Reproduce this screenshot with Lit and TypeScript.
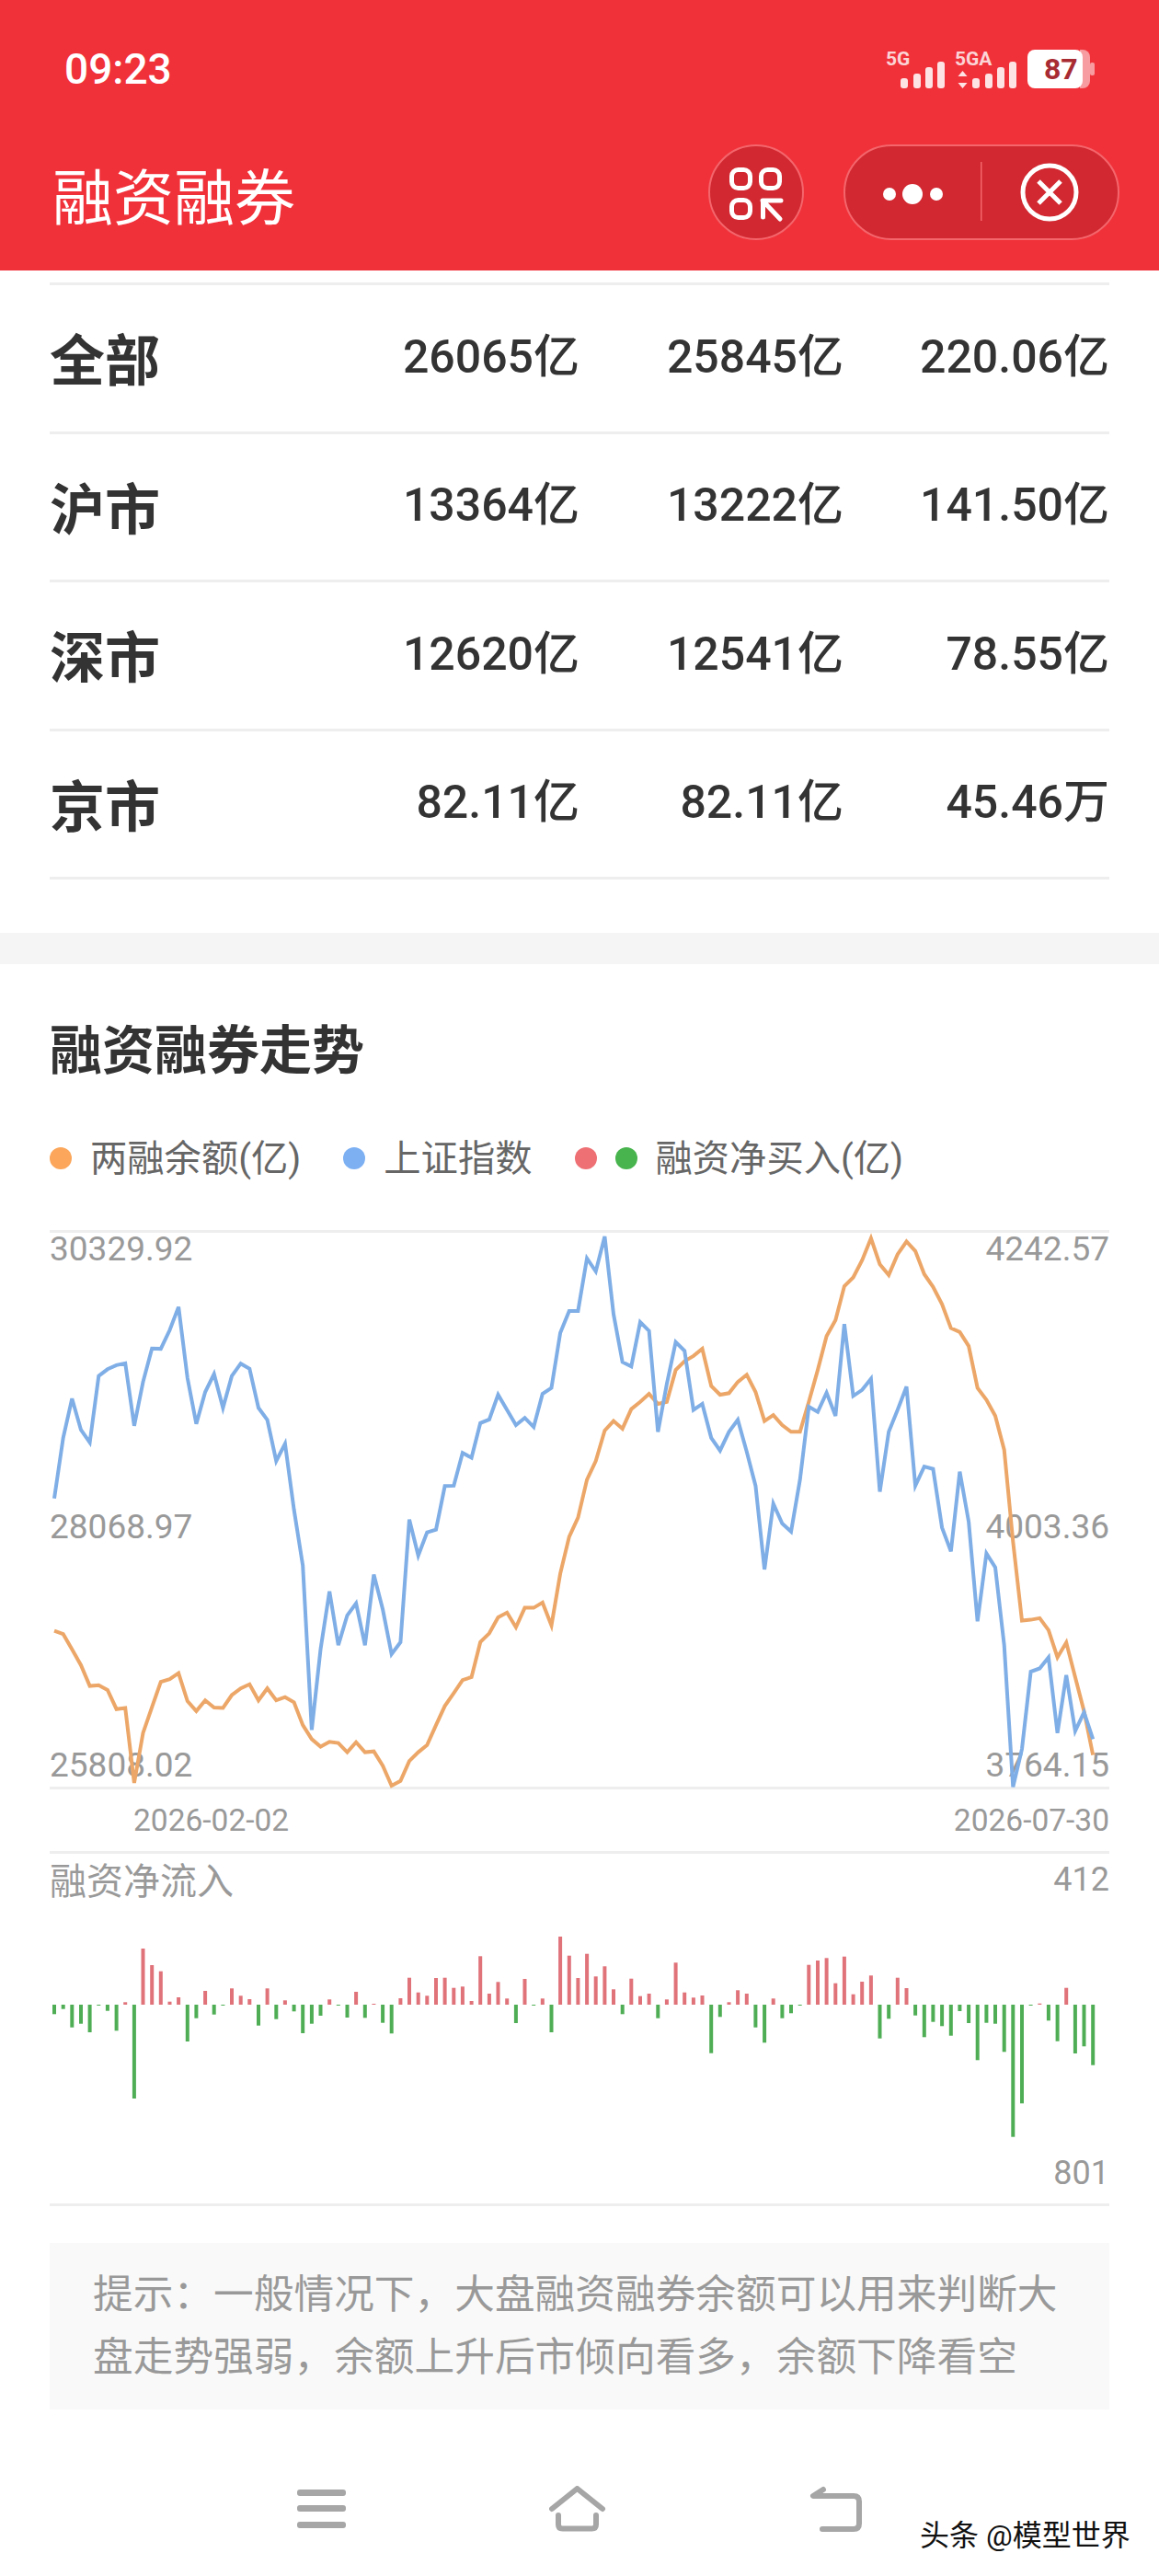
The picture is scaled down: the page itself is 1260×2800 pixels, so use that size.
import {LitElement, html, css, svg} from 'lit';
import {customElement} from 'lit/decorators.js';

// series are read off the reference: y in crop units, index = trading day
const BLUE = [712,560,462,540,572,405,388,378,373,530,420,336,337,290,232,410,525,445,400,485,405,374,387,485,515,618,575,740,880,1292,1090,945,1080,1005,975,1080,903,990,1102,1072,765,855,797,790,681,680,598,610,523,514,452,490,528,510,533,450,435,297,242,242,
  110,143,55,250,370,381,270,292,545,425,320,342,490,475,560,592,545,515,595,680,890,725,775,795,665,482,495,447,505,275,455,440,412,695,545,490,432,680,632,638,785,845,645,770,1020,850,885,1080,1435,1340,1146,1138,1110,1300,1155,1295,1248,1315];
const ORANGE = [1044,1052,1090,1130,1182,1180,1192,1240,1237,1425,1300,1235,1172,1165,1150,1220,1245,1218,1236,1237,1205,1188,1178,1218,1188,1218,1210,1223,1280,1315,1334,1322,1325,1348,1323,1348,1346,1382,1432,1420,1370,1348,1330,1280,1232,1200,1167,1160,1072,1050,1010,998,1035,986,986,973,1030,900,808,760,
  665,618,542,518,537,488,470,450,475,470,390,368,355,337,430,452,448,420,402,445,518,503,528,545,545,470,390,305,265,180,158,115,60,125,152,100,68,92,150,182,225,285,295,330,435,465,505,590,820,1018,1016,1012,1042,1110,1073,1160,1245,1355];
const BARS = [568,551,611,599,627,539,557,622,529,843,354,408,428,527,513,657,581,492,569,538,484,508,519,605,484,584,523,559,630,599,573,520,540,579,495,580,534,596,631,516,449,497,508,450,449,482,478,525,379,501,463,517,597,453,538,517,627,315,377,450,
  371,445,412,487,568,452,509,501,581,520,400,497,514,507,695,577,529,490,501,611,661,517,581,565,539,407,393,385,467,380,503,462,442,647,583,449,483,572,643,593,607,638,558,597,718,596,599,691,968,859,537,533,589,656,482,696,673,734];

const px = (i: number) => 59 + i * 9.651;
const py = (v: number) => 1320 + v / 2.306;
const points = (list: number[]) => list.map((v, i) => `${px(i).toFixed(1)},${py(v).toFixed(1)}`).join(' ');

const ROWS = [
  ['全部', '26065亿', '25845亿', '220.06亿'],
  ['沪市', '13364亿', '13222亿', '141.50亿'],
  ['深市', '12620亿', '12541亿', '78.55亿'],
  ['京市', '82.11亿', '82.11亿', '45.46万'],
];

@customElement('app-root')
export class AppRoot extends LitElement {
  static styles = css`
    :host {
      display: block;
      width: 1260px;
      height: 2800px;
      overflow: hidden;
      position: relative;
      background: #fff;
      font-family: Roboto, "Noto Sans CJK SC", sans-serif;
    }
    .header {
      height: 294px;
      box-sizing: border-box;
      background: #f1313a;
      color: #fff;
      padding: 0 43px 0 57px;
      display: flex;
      flex-direction: column;
    }
    .status {
      height: 157px;
      display: flex;
      justify-content: space-between;
      align-items: flex-start;
    }
    .time {
      margin: 46px 0 0 13px;
      font-size: 46px;
      line-height: 58px;
      font-weight: 500;
    }
    .status-icons {
      display: block;
      margin: 46px 27px 0 0;
    }
    .nav {
      display: flex;
      align-items: center;
      height: 104px;
    }
    .page-title {
      flex: 1;
      font-size: 66px;
      line-height: 80px;
      margin-top: 15px;
    }
    .scan {
      width: 104px;
      height: 104px;
      box-sizing: border-box;
      border-radius: 50%;
      background: #d22831;
      border: 2px solid #f4666c;
      margin-right: 43px;
    }
    .capsule {
      width: 300px;
      height: 104px;
      box-sizing: border-box;
      border-radius: 52px;
      background: #d22831;
      border: 2px solid #f4666c;
    }
    .scan svg, .capsule svg {
      display: block;
      margin: -2px;
    }
    .table {
      margin: 13px 54px 0;
      border-bottom: 3px solid #eee;
    }
    .row {
      height: 161.5px;
      box-sizing: border-box;
      border-top: 3px solid #eee;
      display: grid;
      grid-template-columns: 1fr 287px 287px 289px;
      align-items: center;
      color: #333;
    }
    .name {
      font-size: 60px;
      line-height: 70px;
      font-weight: 700;
      margin-top: 10px;
    }
    .val {
      text-align: right;
      font-size: 50px;
      line-height: 60px;
      font-weight: 500;
      margin-top: -3px;
    }
    .band {
      height: 34px;
      margin-top: 58px;
      background: #f5f5f5;
    }
    .section-title {
      margin: 67px 54px 0;
      font-size: 57px;
      line-height: 56px;
      font-weight: 700;
      color: #333;
    }
    .legend {
      margin: 60px 54px 0;
      height: 48px;
      display: flex;
      align-items: center;
      font-size: 40.3px;
      color: #666;
    }
    .dot {
      width: 24px;
      height: 24px;
      border-radius: 50%;
      margin-right: 20px;
      position: relative;
      top: 4px;
    }
    .legend-text {
      margin-right: 46px;
    }
    .chart {
      display: block;
      margin-top: 51px;
    }
    .chart text {
      fill: #999;
      font-family: Roboto, "Noto Sans CJK SC", sans-serif;
    }
    .tip {
      margin: 38px 54px 0;
      box-sizing: border-box;
      height: 181px;
      padding: 22px 40px 0 47px;
      background: #f9f9f9;
      color: #999;
      font-size: 43.7px;
      line-height: 68px;
    }
    .softkeys {
      display: flex;
      margin: 83px 0 0 323px;
      gap: 221px;
      align-items: flex-start;
    }
    .softkeys svg {
      display: block;
    }
    .watermark {
      position: absolute;
      left: 1000px;
      top: 2736px;
      font-size: 32px;
      line-height: 40px;
      color: #111;
      white-space: nowrap;
    }
  `;

  private renderStatusIcons() {
    const bars = (x: number) => [[0, 11], [14, 16], [27, 23], [40, 29]].map(([dx, h]) =>
      svg`<rect x=${x + dx} y=${96 - h - 46} width="8" height=${h} rx="3" fill="#fde3e4"/>`);
    return html`<svg class="status-icons" width="232" height="52" viewBox="0 0 232 52">
      <text x="5" y="25" font-size="21" font-weight="700" fill="#fbd4d6" font-family="Roboto, sans-serif">5G</text>
      ${bars(21)}
      <text x="80" y="25" font-size="21" font-weight="700" fill="#fbd4d6" font-family="Roboto, sans-serif">5GA</text>
      <path d="M88.500 31l5 6h-10zM88.500 50l5-6h-10z" fill="#fde3e4"/>
      ${bars(99)}
      <path d="M216 8h3a8 8 0 0 1 8 8v26a8 8 0 0 1-8 8h-3z" fill="#f79ca0"/>
      <rect x="227" y="22" width="5" height="14" rx="2" fill="#f79ca0"/>
      <rect x="159" y="8" width="60" height="42" rx="8" fill="#fff"/>
      <text x="177" y="40" font-size="32" font-weight="700" fill="#a82b33" font-family="Roboto, sans-serif">87</text>
    </svg>`;
  }

  private renderChart() {
    const base = 2179;
    return html`<svg class="chart" width="1260" height="1070" viewBox="0 1330 1260 1070">
      <g fill="#eee">
        <rect x="54" y="1337" width="1152" height="3"/>
        <rect x="54" y="1942" width="1152" height="3"/>
        <rect x="54" y="2012" width="1152" height="3"/>
        <rect x="54" y="2395" width="1152" height="3"/>
      </g>
      <g font-size="37">
        <text x="54" y="1370">30329.92</text>
        <text x="54" y="1672">28068.97</text>
        <text x="54" y="1931">25808.02</text>
        <text x="1206" y="1370" text-anchor="end">4242.57</text>
        <text x="1206" y="1672" text-anchor="end">4003.36</text>
        <text x="1206" y="1931" text-anchor="end">3764.15</text>
      </g>
      <g font-size="33.500">
        <text x="145" y="1990">2026-02-02</text>
        <text x="1206" y="1990" text-anchor="end">2026-07-30</text>
      </g>
      <text x="54" y="2059" font-size="40">融资净流入</text>
      <text x="1206" y="2055" font-size="36" text-anchor="end">412</text>
      <text x="1206" y="2374" font-size="36" text-anchor="end">801</text>
      <polyline points=${points(ORANGE)} fill="none" stroke="#eca768" stroke-width="4" stroke-linejoin="miter"/>
      <polyline points=${points(BLUE)} fill="none" stroke="#7faee6" stroke-width="4" stroke-linejoin="miter"/>
      ${BARS.map((v, i) => {
        const end = 2000 + v / 3;
        const up = end < base;
        return svg`<rect x=${(px(i) - 2).toFixed(1)} y=${Math.min(end, base).toFixed(1)} width="4" height=${Math.max(Math.abs(end - base), 1).toFixed(1)} fill=${up ? '#e0727a' : '#4fae55'}/>`;
      })}
    </svg>`;
  }

  protected render() {
    return html`
      <div class="header">
        <div class="status">
          <div class="time">09:23</div>
          ${this.renderStatusIcons()}
        </div>
        <div class="nav">
          <div class="page-title">融资融券</div>
          <div class="scan">
            <svg width="104" height="104" viewBox="0 0 104 104" fill="none" stroke="#fff" stroke-width="5">
              <rect x="25.500" y="27.500" width="20" height="20" rx="7"/>
              <rect x="57.500" y="27.500" width="20" height="20" rx="7"/>
              <rect x="25.500" y="60.500" width="20" height="19" rx="7"/>
              <path d="M59 61h20M59.500 61v18M60 62l18 19" stroke-linecap="round"/>
            </svg>
          </div>
          <div class="capsule">
            <svg width="300" height="104" viewBox="0 0 300 104" fill="none">
              <circle cx="50" cy="54" r="7" fill="#fff"/>
              <circle cx="75" cy="54" r="11" fill="#fff"/>
              <circle cx="101" cy="54" r="7" fill="#fff"/>
              <rect x="149" y="19" width="1.500" height="64" fill="#f4666c"/>
              <circle cx="224" cy="52" r="29" stroke="#fff" stroke-width="5"/>
              <path d="M212 40l24 24M236 40l-24 24" stroke="#fff" stroke-width="5"/>
            </svg>
          </div>
        </div>
      </div>

      <div class="table">
        ${ROWS.map(([name, a, b, c]) => html`
          <div class="row">
            <div class="name">${name}</div>
            <div class="val">${a}</div>
            <div class="val">${b}</div>
            <div class="val">${c}</div>
          </div>
        `)}
      </div>

      <div class="band"></div>
      <div class="section-title">融资融券走势</div>
      <div class="legend">
        <span class="dot" style="background:#fba65a"></span>
        <span class="legend-text">两融余额(亿)</span>
        <span class="dot" style="background:#7cb0f3"></span>
        <span class="legend-text">上证指数</span>
        <span class="dot" style="background:#ee7074"></span>
        <span class="dot" style="background:#47b44d"></span>
        <span class="legend-text">融资净买入(亿)</span>
      </div>

      ${this.renderChart()}

      <div class="tip">提示：一般情况下，大盘融资融券余额可以用来判断大盘走势强弱，余额上升后市倾向看多，余额下降看空</div>

      <div class="softkeys">
        <svg width="53" height="50" viewBox="0 0 53 50" fill="#a6a6a6">
          <rect x="0" y="4" width="53" height="7" rx="3"/>
          <rect x="0" y="21" width="53" height="7" rx="3"/>
          <rect x="0" y="39" width="53" height="7" rx="3"/>
        </svg>
        <svg width="62" height="50" viewBox="600 2702 62 50" fill="none" stroke="#a6a6a6" stroke-width="6" stroke-linecap="round" stroke-linejoin="round">
          <path d="M603 2727l27.500-22 27.500 22"/>
          <path d="M610 2734v10q0 4.500 4.500 4.500h32q4.500 0 4.500-4.500v-10"/>
        </svg>
        <svg width="60" height="50" viewBox="882 2702 60 50" fill="none" stroke="#a6a6a6" stroke-width="6" stroke-linecap="round" stroke-linejoin="round">
          <path d="M897 2706l-11 7h44q6 0 6 6v24q0 6-6 6h-34"/>
        </svg>
      </div>
      <div class="watermark">头条 @模型世界</div>
    `;
  }
}
